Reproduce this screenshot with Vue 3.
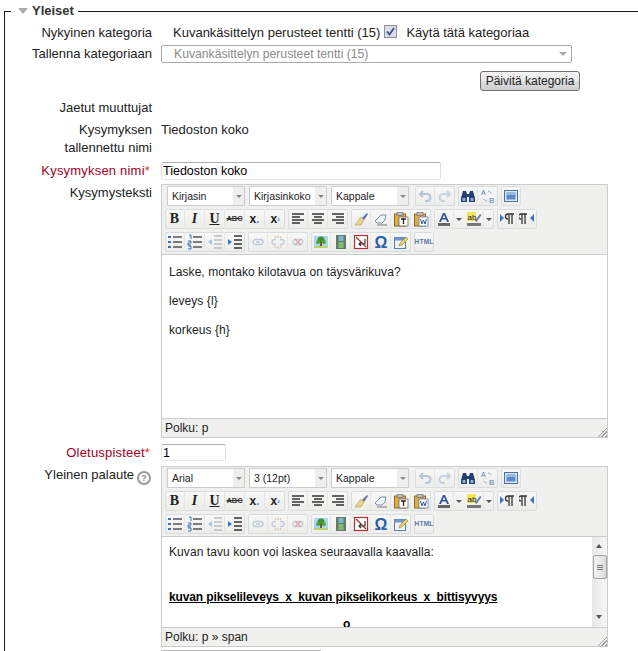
<script setup>
const iconSvg = {
  undo: '<path d="M6 3 3 6l3 3M3.500 6H10a3 3 0 0 1 0 7H8" fill="none" stroke="#b4c6dc" stroke-width="2"/>',
  redo: '<path d="M10 3l3 3-3 3M12.500 6H6a3 3 0 0 0 0 7h2" fill="none" stroke="#c6d3e3" stroke-width="2"/>',
  find: '<path d="M1 10l2-7h3l1 3h2l1-3h3l2 7v4H9V9H7v5H1z" fill="#24406e"/><path d="M2.500 10h3v3h-3zM10.500 10h3v3h-3z" fill="#8fb0d8"/>',
  replace: '<text x="1" y="7" font-size="7" fill="#5580b8" font-family="Liberation Sans">A</text><text x="9" y="15" font-size="8" fill="#5580b8" font-family="Liberation Sans">B</text><path d="M8 3a5 5 0 0 1 4 3M7 13a5 5 0 0 1-4-3" fill="none" stroke="#6d93c6" stroke-dasharray="1.500 1"/>',
  full: '<rect x="1.500" y="2.500" width="13" height="11" fill="#dbe7f6" stroke="#4a72a8"/><rect x="3.500" y="4.500" width="9" height="7" fill="#5d8bc9"/><path d="M4 6h8" stroke="#dce9f8"/>',
  left: '<path d="M2 3h12M2 6h8M2 9h12M2 12h8" stroke="#333" stroke-width="1.400"/>',
  center: '<path d="M2 3h12M4 6h8M2 9h12M4 12h8" stroke="#333" stroke-width="1.400"/>',
  right: '<path d="M2 3h12M6 6h8M2 9h12M6 12h8" stroke="#333" stroke-width="1.400"/>',
  brush: '<path d="M9 7l5-5 1 1-4 6z" fill="#5577aa"/><path d="M8 6l3 3-3 5H2c2-2 3-5 6-8z" fill="#e8d28e" stroke="#b39a55" stroke-width=".6"/>',
  eraser: '<path d="M2 10l6-6h5l-1 5-3 3H4z" fill="#eef3fa" stroke="#7d8ea6"/><path d="M4 14h10" stroke="#777"/>',
  pasteT: '<rect x="1.500" y="3" width="11" height="12" fill="#e0ad48" stroke="#8b6a22"/><rect x="4" y="1.500" width="6" height="3" fill="#bbb" stroke="#666" stroke-width=".6"/><rect x="6" y="6" width="9" height="9" fill="#fff" stroke="#555" stroke-width=".7"/><path d="M8 8h5M10.500 8v5" stroke="#222" stroke-width="1.300"/>',
  pasteW: '<rect x="1.500" y="3" width="11" height="12" fill="#e0ad48" stroke="#8b6a22"/><rect x="4" y="1.500" width="6" height="3" fill="#bbb" stroke="#666" stroke-width=".6"/><rect x="6" y="6" width="9" height="9" fill="#fff" stroke="#4b6ea8" stroke-width=".7"/><path d="M7.500 8l1.500 5 1.500-4 1.500 4 1.500-5" fill="none" stroke="#2c5aa0"/>',
  forecolor: '<path d="M3 11 7 2h2l4 9h-2l-1-2.500H6L5 11zM6.700 7h2.600L8 3.800z" fill="#2f5597"/><rect x="2" y="12" width="12" height="3" fill="#666"/>',
  backcolor: '<rect x="1" y="1" width="9" height="9" fill="#f4e45c"/><text x="1.500" y="8.500" font-size="8" font-family="Liberation Sans" fill="#222">ab</text><path d="M9 10l5-7 1.500 1-5 7z" fill="#5b7fb5"/><rect x="1" y="12" width="14" height="3" fill="#777"/>',
  ltr: '<path d="M1 3v8l4-4z" fill="#3a76c4"/><path d="M9 3h6M9 3a2.500 2.500 0 0 0 0 5M10 3v10M13 3v10" fill="none" stroke="#333" stroke-width="1.300"/>',
  rtl: '<path d="M15 3v8l-4-4z" fill="#3a76c4"/><path d="M2 3h6M2 3a2.500 2.500 0 0 0 0 5M3 3v10M6 3v10" fill="none" stroke="#333" stroke-width="1.300"/>',
  ul: '<path d="M6 3h9M6 8h9M6 13h9" stroke="#555" stroke-width="1.300"/><path d="M1 2h3v2H1zM1 7h3v2H1zM1 12h3v2H1z" fill="#3b6fb6"/>',
  ol: '<path d="M6 3h9M6 8h9M6 13h9" stroke="#555" stroke-width="1.300"/><path d="M2 1h2v4M1 7h3v2H1v2h3M1 12h3v3H1" fill="none" stroke="#3b6fb6"/>',
  outdent: '<path d="M7 2h8M7 6h8M7 10h8M7 14h8" stroke="#b9bec6" stroke-width="1.300"/><path d="M1 8l4-3v6z" fill="#a9c2e2"/>',
  indent: '<path d="M7 2h8M7 6h8M7 10h8M7 14h8" stroke="#333" stroke-width="1.300"/><path d="M5 8 1 5v6z" fill="#2f7bd0"/>',
  link: '<path d="M3 8a2.500 2.500 0 0 1 2.500-2.500H8M8 10.500H5.500A2.500 2.500 0 0 1 3 8M8 5.500h2.500a2.500 2.500 0 0 1 0 5H8M6 8h4" fill="none" stroke="#bfcbdc" stroke-width="1.400"/>',
  unlink: '<path d="M2 8a2.500 2.500 0 0 1 2.500-2.500H6M6 10.500H4.500A2.500 2.500 0 0 1 2 8M10 5.500h1.500a2.500 2.500 0 0 1 0 5H10" fill="none" stroke="#bfcbdc" stroke-width="1.400"/><path d="M8 1v3M8 12v3M5 2l1 2M11 2l-1 2M5 14l1-2M11 14l-1-2" stroke="#d4bfa0"/>',
  anchorOff: '<path d="M3 8a2.500 2.500 0 0 1 2.500-2.500h5a2.500 2.500 0 0 1 0 5h-5A2.500 2.500 0 0 1 3 8z" fill="none" stroke="#c8ced8" stroke-width="1.400"/><path d="M5 5l6 6M11 5l-6 6" stroke="#dfa7a7" stroke-width="1.400"/>',
  image: '<rect x="1" y="2" width="14" height="12" fill="#a9d6f0"/><circle cx="8" cy="6" r="3.500" fill="#3e8f2e"/><circle cx="5" cy="8" r="2" fill="#55a53a"/><circle cx="11" cy="8" r="2" fill="#55a53a"/><path d="M7 8h2v4H7z" fill="#7a5a2b"/><path d="M1 12h14v2H1z" fill="#b7d36b"/>',
  media: '<path d="M3 1h10v14H3z" fill="#5f7d69"/><path d="M5.500 2h5v5h-5z" fill="#7fb6c8"/><path d="M5.500 8h5v6h-5z" fill="#86b96f"/>',
  cleanup: '<rect x="1.500" y="1.500" width="13" height="13" fill="#fff" stroke="#b03030" stroke-width="1.200"/><path d="M3 3l10 10" stroke="#b03030" stroke-width="1.200"/><path d="M12 5v5H6M8 8l-2 2 2 2" fill="none" stroke="#333" stroke-width="1.200"/>',
  charmap: '<text x="8" y="14" text-anchor="middle" font-size="16" font-weight="bold" font-family="Liberation Sans" fill="#2f5fa8">Ω</text>',
  edit: '<rect x="1.500" y="3.500" width="11" height="11" fill="#eef3fa" stroke="#5e7fa9"/><path d="M1.500 3.500h11v3h-11z" fill="#6f97c9"/><path d="M6 12l1-3 6-6 2 2-6 6z" fill="#e8cf6a" stroke="#85752f" stroke-width=".5"/>'
}

const textIcons = {
  bold: { text: 'B', cls: 'serif-b' },
  italic: { text: 'I', cls: 'serif-i' },
  underline: { text: 'U', cls: 'serif-u' },
  strike: { text: 'ABC', cls: 'abc' },
  sub: { text: 'x', sup: '₂', cls: 'script' },
  sup: { text: 'x', sup: '²', cls: 'script' },
  html: { text: 'HTML', cls: 'html' }
}

const firstRowGroups = [['undo', 'redo'], ['find', 'replace'], ['full']]

const toolbarRows = [
  [['bold', 'italic', 'underline', 'strike', 'sub', 'sup'], ['left', 'center', 'right'], ['brush', 'eraser', 'pasteT', 'pasteW'], ['forecolor+', 'backcolor+'], ['ltr', 'rtl']],
  [['ul', 'ol', 'outdent', 'indent'], ['link', 'unlink', 'anchorOff'], ['image', 'media', 'cleanup', 'charmap', 'edit'], ['html']]
]

const editors = [
  {
    font: 'Kirjasin',
    size: 'Kirjasinkoko',
    path: 'Polku: p',
    height: 163,
    scroll: false,
    cls: 'body-plain',
    body: [
      { text: 'Laske, montako kilotavua on täysvärikuva?' },
      { text: 'leveys {l}' },
      { text: 'korkeus {h}' }
    ]
  },
  {
    font: 'Arial',
    size: '3 (12pt)',
    path: 'Polku: p » span',
    height: 90,
    scroll: true,
    cls: 'body-feedback',
    body: [
      { text: 'Kuvan tavu koon voi laskea seuraavalla kaavalla:' },
      { text: 'kuvan pikselileveys  x  kuvan pikselikorkeus  x  bittisyvyys', cls: 'formula' },
      { text: 'o', cls: 'clipped' }
    ]
  }
]

const isText = (name) => !!textIcons[name]
const clean = (name) => name.replace('+', '')
</script>

<template>
  <div class="page">
    <fieldset class="section">
      <legend>
        <span class="arrow"></span>
        <span>Yleiset</span>
      </legend>

      <div class="row row-cat">
        <div class="label">Nykyinen kategoria</div>
        <div class="field current-cat">
          <span>Kuvankäsittelyn perusteet tentti (15)</span>
          <span class="checkbox">
            <svg viewBox="0 0 11 11" width="11" height="11"><path d="M2 5.500 4.500 8.500 9 2" fill="none" stroke="#3d4f92" stroke-width="1.800"/></svg>
          </span>
          <span class="use-cat">Käytä tätä kategoriaa</span>
        </div>
      </div>

      <div class="row row-save">
        <div class="label">Tallenna kategoriaan</div>
        <div class="field">
          <div class="fake-select">
            <span>Kuvankäsittelyn perusteet tentti (15)</span>
            <span class="select-caret"></span>
          </div>
        </div>
      </div>

      <div class="update-row">
        <button type="button" class="update-btn">Päivitä kategoria</button>
      </div>

      <div class="row row-shared">
        <div class="label">Jaetut muuttujat</div>
      </div>

      <div class="row row-saved">
        <div class="label">Kysymyksen<br />tallennettu nimi</div>
        <div class="field">Tiedoston koko</div>
      </div>

      <div class="row row-name">
        <div class="label required">Kysymyksen nimi<i>*</i></div>
        <div class="field">
          <input class="text-input name-input" type="text" value="Tiedoston koko" />
        </div>
      </div>

      <template v-for="(ed, i) in editors" :key="i">
        <div v-if="i === 1" class="row row-points">
          <div class="label required">Oletuspisteet<i>*</i></div>
          <div class="field">
            <input class="text-input points-input" type="text" value="1" />
          </div>
        </div>

        <div class="row row-editor">
          <div v-if="i === 0" class="label">Kysymysteksti</div>
          <div v-else class="label">
            Yleinen palaute<span class="help">?</span>
          </div>
          <div class="field">
            <div class="editor">
              <div class="toolbar">
                <div class="tb-row tb-first">
                  <div class="tb-select sel-font"><span>{{ ed.font }}</span><b></b></div>
                  <div class="tb-select sel-size"><span>{{ ed.size }}</span><b></b></div>
                  <div class="tb-select sel-format"><span>Kappale</span><b></b></div>
                  <div v-for="(g, gi) in firstRowGroups" :key="gi" class="tb-group">
                    <span v-for="name in g" :key="name" class="tb-btn">
                      <svg viewBox="0 0 16 16" width="16" height="16" v-html="iconSvg[name]"></svg>
                    </span>
                  </div>
                </div>
                <div v-for="(groups, r) in toolbarRows" :key="r" class="tb-row">
                  <div v-for="(g, gi) in groups" :key="gi" class="tb-group">
                    <template v-for="name in g" :key="name">
                      <span class="tb-btn">
                        <span v-if="isText(name)" :class="textIcons[name].cls">{{ textIcons[name].text }}<sub v-if="textIcons[name].sup">{{ textIcons[name].sup }}</sub></span>
                        <svg v-else viewBox="0 0 16 16" width="16" height="16" v-html="iconSvg[clean(name)]"></svg>
                      </span>
                      <span v-if="name.endsWith('+')" class="tb-split"></span>
                    </template>
                  </div>
                </div>
              </div>

              <div class="content" :class="ed.cls" :style="{ height: ed.height + 'px' }">
                <div class="content-text">
                  <p v-for="(line, li) in ed.body" :key="li" :class="line.cls">{{ line.text }}</p>
                </div>
                <div v-if="ed.scroll" class="scrollbar">
                  <span class="sb-up"></span>
                  <span class="sb-thumb"><em></em><em></em><em></em></span>
                  <span class="sb-down"></span>
                </div>
              </div>

              <div class="status">
                <span>{{ ed.path }}</span>
                <span class="grip"></span>
              </div>
            </div>
          </div>
        </div>
      </template>

      <div class="row row-next">
        <div class="field"><div class="next-input"></div></div>
      </div>
    </fieldset>
  </div>
</template>

<style>
html, body {
  margin: 0;
  background: #fff;
  overflow: hidden;
}
</style>

<style scoped>
.page {
  width: 638px;
  height: 651px;
  overflow: hidden;
  font-family: "Liberation Sans", Arial, sans-serif;
  font-size: 13px;
  color: #222;
  box-sizing: border-box;
  padding: 0 0 0 4px;
}

.section {
  margin: 2px 0 0;
  padding: 0;
  border: 0;
  border-top: 1px solid #1a1a1a;
  border-left: 1px solid #1a1a1a;
  min-width: 0;
  width: 634px;
  box-sizing: border-box;
  height: 700px;
}

legend {
  margin-left: 6px;
  padding: 0 4px 0 7px;
  font-weight: bold;
  font-size: 13px;
  line-height: 18px;
  color: #333;
  display: flex;
  align-items: center;
}

.arrow {
  width: 0;
  height: 0;
  border-left: 5px solid transparent;
  border-right: 5px solid transparent;
  border-top: 6px solid #aaa;
  margin-right: 4px;
}

.row {
  display: flex;
  align-items: flex-start;
}

.label {
  width: 147px;
  flex: none;
  text-align: right;
  line-height: 18px;
}

.field {
  margin-left: 9px;
  line-height: 18px;
}

.required {
  color: #a5001e;
  white-space: nowrap;
  letter-spacing: 0.2px;
}
.required i {
  color: #e8352e;
  font-style: normal;
  margin-right: 2px;
}

.row-cat {
  margin-top: 4px;
}
.current-cat {
  display: flex;
  align-items: center;
  padding-left: 12px;
}
.checkbox {
  box-sizing: border-box;
  width: 13px;
  height: 13px;
  margin-left: 4px;
  margin-top: -4px;
  border: 1px solid #8e8f8f;
  background: #dadde9;
  display: flex;
}
.use-cat {
  margin-left: 9px;
}

.row-save {
  margin-top: 3px;
}
.fake-select {
  width: 397px;
  height: 16px;
  border: 1px solid #aaa;
  border-radius: 2px;
  padding-left: 12px;
  color: #8a8a8a;
  font-size: 12.2px;
  display: flex;
  align-items: center;
  justify-content: space-between;
  line-height: 16px;
}
.select-caret {
  width: 0;
  height: 0;
  border-left: 4px solid transparent;
  border-right: 4px solid transparent;
  border-top: 4px solid #aaa;
  margin-right: 4px;
}

.update-row {
  display: flex;
  padding-left: 475px;
  margin-top: 8px;
}
.update-btn {
  width: 100px;
  height: 20px;
  padding: 0;
  font: 12px "Liberation Sans", Arial, sans-serif;
  color: #222;
  border: 1px solid #707070;
  border-radius: 3px;
  background: linear-gradient(#f2f2f2 0%, #ebebeb 49%, #ddd 50%, #cfcfcf 100%);
}

.row-shared {
  margin-top: 8px;
}
.row-saved {
  margin-top: 4px;
}
.row-name {
  margin-top: 5px;
}
.text-input {
  box-sizing: border-box;
  display: block;
  height: 18px;
  font: 12.5px "Liberation Sans", Arial, sans-serif;
  color: #000;
  padding: 1px 1px;
  border: 1px solid #abadb3;
  border-radius: 2px;
  border-bottom-color: #e3e9ef;
  border-right-color: #dbdfe6;
  border-left-color: #e2e3ea;
  outline: none;
}
.name-input {
  width: 280px;
}
.points-input {
  width: 65px;
  height: 17px;
}

.row-editor {
  margin-top: 4px;
}
.row-points {
  margin-top: 6px;
}
.row-points + .row-editor {
  margin-top: 4px;
}

.editor {
  width: 447px;
  box-sizing: border-box;
  border: 1px solid #ccc;
  background: #f0f0ee;
  font-size: 12px;
}

.toolbar {
  padding: 1px 2px 0 3px;
  border-bottom: 1px solid #ccc;
}
.tb-row {
  display: flex;
  align-items: center;
  gap: 3px;
  height: 20px;
  margin-bottom: 3px;
}
.tb-row:last-child {
  margin-bottom: 2px;
}
.tb-first {
  margin-left: 2px;
}

.tb-select {
  box-sizing: border-box;
  width: 78px;
  height: 20px;
  display: flex;
  align-items: center;
  justify-content: space-between;
  background: #fff;
  border: 1px solid #ccc;
  font-size: 10.5px;
  padding-left: 4px;
  margin-right: 1px;
  color: #222;
}
.tb-select b {
  display: block;
  width: 11px;
  height: 18px;
  background: #eee;
  position: relative;
}
.tb-select b::after {
  content: "";
  position: absolute;
  left: 3px;
  top: 8px;
  border-left: 3px solid transparent;
  border-right: 3px solid transparent;
  border-top: 3px solid #888;
}
.sel-format {
  margin-right: 3px;
}

.tb-group {
  display: flex;
  align-items: center;
  height: 20px;
  border-radius: 2px;
  box-shadow: inset 0 0 0 1px #d9dce1;
  background: linear-gradient(#f8f8f7, #ecece9);
}
.tb-btn {
  width: 20px;
  height: 20px;
  display: flex;
  align-items: center;
  justify-content: center;
  overflow: hidden;
  box-sizing: border-box;
  border-right: 1px solid #e6e6e4;
}
.tb-btn:last-child {
  border-right: 0;
}
.tb-btn svg {
  display: block;
}
.tb-split {
  width: 10px;
  height: 20px;
  flex: none;
  position: relative;
}
.tb-split::after {
  content: "";
  position: absolute;
  left: 2px;
  top: 9px;
  border-left: 3px solid transparent;
  border-right: 3px solid transparent;
  border-top: 3px solid #555;
}

.serif-b,
.serif-i,
.serif-u {
  font-family: "Liberation Serif", serif;
  font-weight: bold;
  font-size: 14px;
  color: #222;
  line-height: 1;
}
.serif-i {
  font-style: italic;
}
.serif-u {
  text-decoration: underline;
}
.abc {
  font-size: 7.5px;
  font-weight: bold;
  color: #333;
  text-decoration: line-through;
}
.script {
  font-size: 12px;
  font-weight: bold;
  color: #222;
  line-height: 1;
}
.script sub {
  font-size: 7px;
  color: #3a76c4;
  vertical-align: baseline;
}
.html {
  font-size: 6.5px;
  font-weight: bold;
  color: #5878ab;
  letter-spacing: 0.2px;
}

.content {
  background: #fff;
  display: flex;
  overflow: hidden;
  box-sizing: border-box;
}
.content-text {
  flex: 1;
  padding: 10px 7px 0;
  min-width: 0;
  color: #222;
  letter-spacing: 0.07px;
}
.body-feedback .content-text {
  padding-top: 8px;
}
.content-text p {
  margin: 0 0 14px;
  line-height: 15px;
}
.content-text .formula {
  font-weight: bold;
  text-decoration: underline;
  color: #000;
  white-space: pre;
  letter-spacing: -0.12px;
  margin-top: 30px;
}
.content-text .clipped {
  font-weight: bold;
  color: #000;
  padding-left: 174px;
  margin-top: -2px;
}

.scrollbar {
  width: 15px;
  flex: none;
  background: linear-gradient(90deg, #e8e8e8, #f6f6f6);
  display: flex;
  flex-direction: column;
  align-items: center;
}
.sb-up,
.sb-down {
  display: block;
  height: 18px;
  width: 15px;
  flex: none;
  position: relative;
}
.sb-up::after,
.sb-down::after {
  content: "";
  position: absolute;
  left: 4px;
  border-left: 3px solid transparent;
  border-right: 3px solid transparent;
}
.sb-up::after {
  top: 7px;
  border-bottom: 4px solid #555;
}
.sb-down::after {
  top: 6px;
  border-top: 4px solid #555;
}
.sb-thumb {
  width: 14px;
  height: 24px;
  box-sizing: border-box;
  margin-bottom: auto;
  border: 1px solid #a0a0a0;
  border-radius: 2px;
  background: linear-gradient(90deg, #f4f4f4, #dcdcdc);
  display: flex;
  flex-direction: column;
  align-items: center;
  justify-content: center;
  gap: 1px;
}
.sb-thumb em {
  display: block;
  width: 6px;
  height: 1px;
  background: #777;
}

.status {
  height: 18px;
  line-height: 18px;
  padding-left: 3px;
  border-top: 1px solid #ccc;
  position: relative;
  color: #222;
  font-size: 12px;
}
.grip {
  position: absolute;
  right: 0;
  bottom: 0;
  width: 10px;
  height: 10px;
  background: linear-gradient(135deg, transparent 50%, #999 50%, #999 58%, transparent 58%, transparent 68%, #999 68%, #999 76%, transparent 76%, transparent 86%, #999 86%);
}

.row-next {
  margin-top: 3px;
  padding-left: 147px;
}
.next-input {
  width: 160px;
  height: 18px;
  border: 1px solid #bbb;
  box-sizing: border-box;
}

.help {
  display: inline-block;
  box-sizing: border-box;
  width: 14px;
  height: 14px;
  margin-left: 3px;
  margin-right: 1px;
  border: 2px solid #999;
  border-radius: 50%;
  color: #888;
  font-size: 9px;
  font-weight: bold;
  line-height: 10px;
  text-align: center;
  vertical-align: -2px;
}
</style>
